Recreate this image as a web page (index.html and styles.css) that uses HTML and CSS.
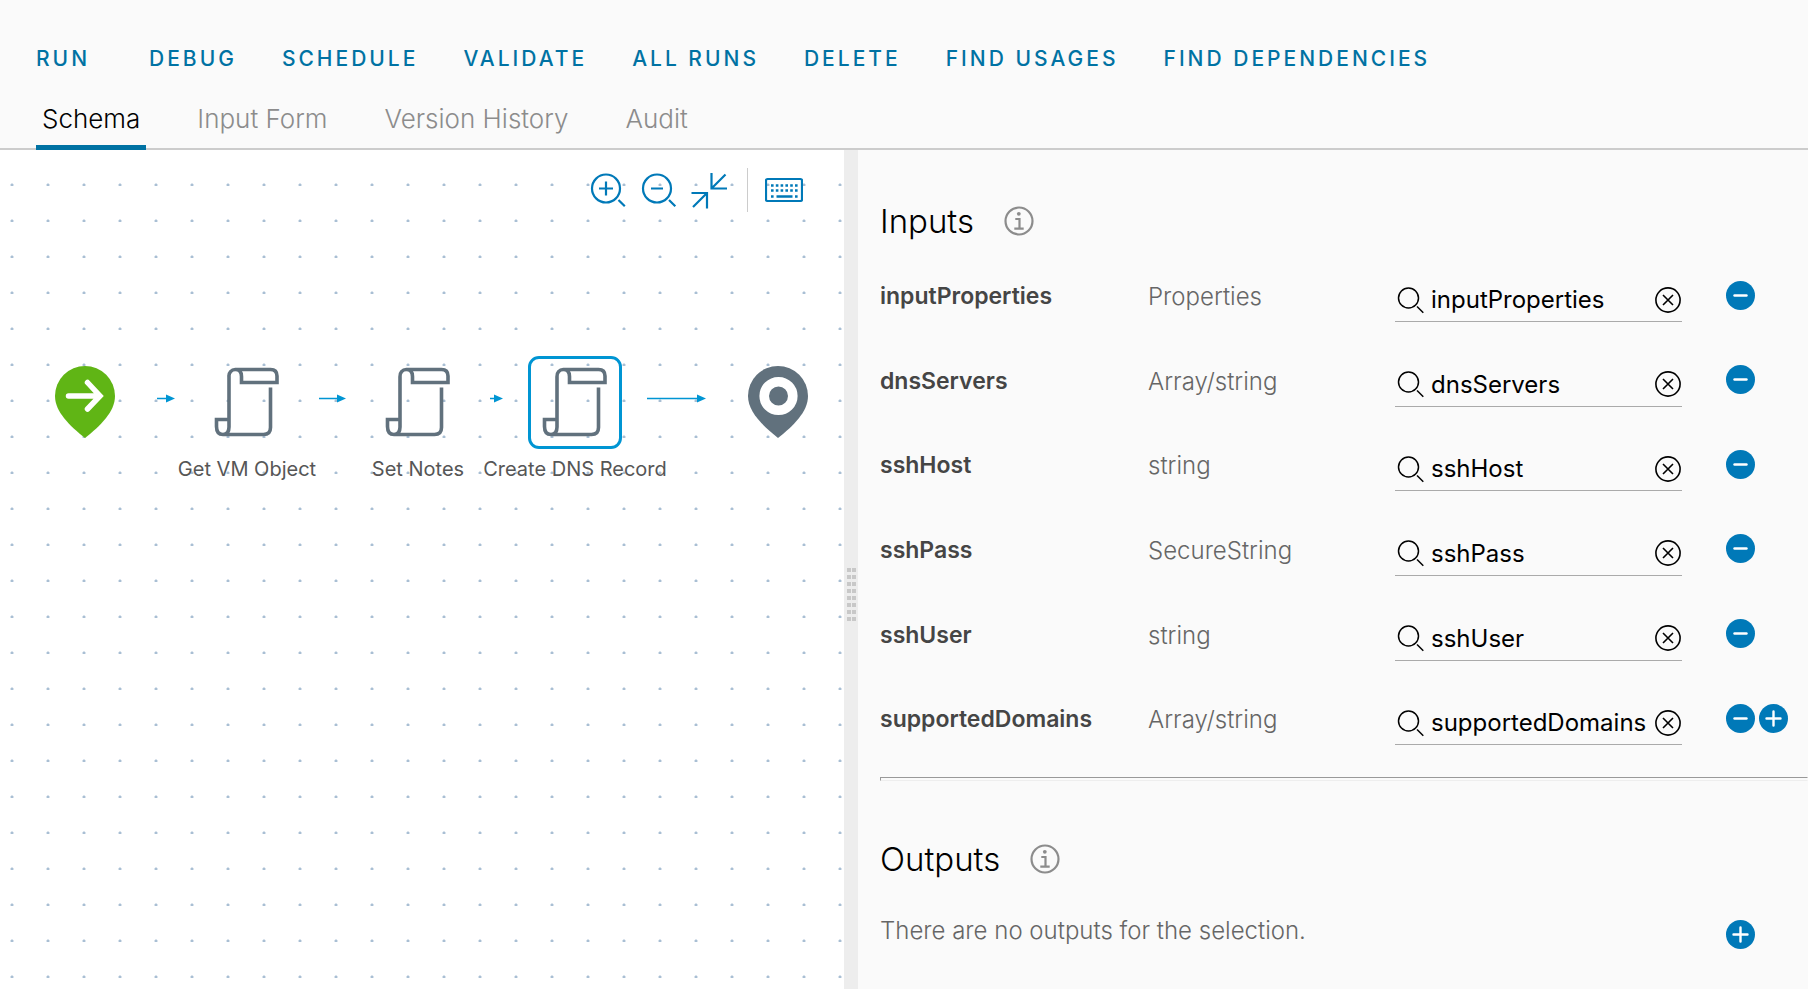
FILE: index.html
```
<!DOCTYPE html>
<html lang="en">
<head>
<meta charset="utf-8">
<title>Workflow editor</title>
<link rel="stylesheet" href="styles.css">
</head>
<body>
<svg class="sprite" aria-hidden="true">
  <symbol id="search" viewBox="0 0 28 28"><g fill="none" stroke="currentColor" stroke-width="1.5"><circle cx="11.5" cy="12" r="10"/><path d="M20 20.5l6.300 6.300"/></g></symbol>
  <symbol id="clear" viewBox="0 0 26 26"><g fill="none" stroke="currentColor" stroke-width="1.600"><circle cx="13" cy="13" r="12.100"/><path d="M8 8l10 10M18 8L8 18"/></g></symbol>
  <symbol id="minus" viewBox="0 0 29 29"><circle cx="14.500" cy="14.500" r="14.500" fill="currentColor"/><path d="M8.500 14.500h12" stroke="#fff" stroke-width="2.400" stroke-linecap="round"/></symbol>
  <symbol id="plus" viewBox="0 0 29 29"><circle cx="14.500" cy="14.500" r="14.500" fill="currentColor"/><path d="M7.500 14.500h14M14.500 7.500v14" stroke="#fff" stroke-width="2.400" stroke-linecap="round"/></symbol>
  <symbol id="info" viewBox="0 0 30 30"><g fill="none" stroke="currentColor" stroke-width="2.200"><circle cx="15" cy="15" r="13.500"/><path d="M11.300 13h4.200v9.300M10.300 22.700h9.400"/></g><circle cx="14.800" cy="7.800" r="1.900" fill="currentColor"/></symbol>
  <symbol id="scroll" viewBox="0 0 66 70"><g fill="none" stroke="currentColor" stroke-width="3.600"><path d="M15 52.500V9.500A6.300 6.300 0 0 1 21.300 2.500H56.500q6.500 0 6.500 6.500v6.500H27.500V9.500Q27.500 2.500 21.300 2.500M15 52.500H2.500v7q0 8 6.500 8Q15 67.500 15 60v-7.500M8.500 67.500H49.500q7 0 7-7V20.500"/></g></symbol>
</svg>

<header class="header">
  <nav class="actions" aria-label="Workflow actions">
    <button class="action action-run">RUN</button>
    <button class="action">DEBUG</button>
    <button class="action">SCHEDULE</button>
    <button class="action">VALIDATE</button>
    <button class="action">ALL RUNS</button>
    <button class="action">DELETE</button>
    <button class="action">FIND USAGES</button>
    <button class="action">FIND DEPENDENCIES</button>
  </nav>
  <div class="tabs" role="tablist">
    <button class="tab tab-active" role="tab" aria-selected="true">Schema</button>
    <button class="tab" role="tab">Input Form</button>
    <button class="tab" role="tab">Version History</button>
    <button class="tab" role="tab">Audit</button>
  </div>
</header>

<main class="workspace">
  <section class="canvas" aria-label="Schema">
    <div class="tools">
      <button class="tool" aria-label="Zoom in"><svg class="tool-icon" viewBox="0 0 38 38"><g fill="none" stroke="currentColor" stroke-width="2.200"><circle cx="17" cy="17.500" r="14"/><path d="M10 17.500h14M17 10.500v14M29.500 29l6.300 6.300"/></g></svg></button>
      <button class="tool" aria-label="Zoom out"><svg class="tool-icon" viewBox="0 0 38 38"><g fill="none" stroke="currentColor" stroke-width="2.200"><circle cx="17" cy="17.500" r="14"/><path d="M11 17.500h12M29 29l6.300 6.300"/></g></svg></button>
      <button class="tool" aria-label="Fit to screen"><svg class="tool-icon" viewBox="0 0 38 38"><path d="M20.500 2V17.500H36M20.500 17.500L34.500 3.500M.5 22H16v15.500M16 22L2 36" fill="none" stroke="currentColor" stroke-width="2.200"/></svg></button>
      <button class="tool tool-keys" aria-label="Keyboard shortcuts"><svg class="tool-icon" viewBox="0 0 38 38"><rect x="1" y="8" width="36" height="22" rx="1.500" fill="none" stroke="currentColor" stroke-width="2.200"/><path d="M6 14.500h27M6 19.500h27" stroke="currentColor" stroke-width="2.600" stroke-dasharray="2.600 2.200"/><path d="M6 25.500h2.600M11.500 25.500h16M30 25.500h2.600" stroke="currentColor" stroke-width="2.400"/></svg></button>
    </div>

    <svg class="links" aria-hidden="true">
      <g stroke="#0095d3" stroke-width="1.300"><path d="M157 248.500h14M319 248.500h22M490 248.500h8M647 248.500h52"/></g>
      <g fill="#0095d3"><path d="M166 244.500l9 4-9 4zM337 244.500l9 4-9 4zM494 244.500l9 4-9 4zM697 244.500l9 4-9 4z"/></g>
    </svg>

    <button class="node node-start" aria-label="Start"><svg class="pin" viewBox="0 0 60 72"><path d="M30 0a30 30 0 0 1 30 30c0 16-15 30-30 42C15 60 0 46 0 30A30 30 0 0 1 30 0z" fill="#60b515"/><path d="M13.500 30H44M32.500 16.500L45 30 32.500 43" fill="none" stroke="#fff" stroke-width="5.500" stroke-linecap="round"/></svg></button>
    <button class="node node-vm"><span class="frame"><svg class="scroll"><use href="#scroll"/></svg></span>Get VM Object</button>
    <button class="node node-notes"><span class="frame"><svg class="scroll"><use href="#scroll"/></svg></span>Set Notes</button>
    <button class="node node-dns"><span class="frame frame-selected"><svg class="scroll"><use href="#scroll"/></svg></span>Create DNS Record</button>
    <button class="node node-end" aria-label="End"><svg class="pin" viewBox="0 0 60 72"><path d="M30 0a30 30 0 0 1 30 30c0 16-15 30-30 42C15 60 0 46 0 30A30 30 0 0 1 30 0z" fill="#61717d"/><circle cx="30.500" cy="30" r="14.300" fill="none" stroke="#fff" stroke-width="9.600"/></svg></button>
  </section>

  <div class="splitter" role="separator" aria-orientation="vertical"><div class="grip"></div></div>

  <aside class="panel">
    <div class="heading"><h2 class="title">Inputs</h2><svg class="info"><use href="#info"/></svg></div>
    <div class="rows">
      <div class="row">
        <label class="name" for="f1">inputProperties</label><span class="type">Properties</span>
        <div class="field"><svg class="search"><use href="#search"/></svg><input class="value" id="f1" value="inputProperties"><button class="clear" aria-label="Clear"><svg class="clear-icon"><use href="#clear"/></svg></button></div>
        <div class="edit"><button class="round" aria-label="Remove"><svg class="round-icon"><use href="#minus"/></svg></button></div>
      </div>
      <div class="row">
        <label class="name" for="f2">dnsServers</label><span class="type">Array/string</span>
        <div class="field"><svg class="search"><use href="#search"/></svg><input class="value" id="f2" value="dnsServers"><button class="clear" aria-label="Clear"><svg class="clear-icon"><use href="#clear"/></svg></button></div>
        <div class="edit"><button class="round" aria-label="Remove"><svg class="round-icon"><use href="#minus"/></svg></button></div>
      </div>
      <div class="row">
        <label class="name" for="f3">sshHost</label><span class="type">string</span>
        <div class="field"><svg class="search"><use href="#search"/></svg><input class="value" id="f3" value="sshHost"><button class="clear" aria-label="Clear"><svg class="clear-icon"><use href="#clear"/></svg></button></div>
        <div class="edit"><button class="round" aria-label="Remove"><svg class="round-icon"><use href="#minus"/></svg></button></div>
      </div>
      <div class="row">
        <label class="name" for="f4">sshPass</label><span class="type">SecureString</span>
        <div class="field"><svg class="search"><use href="#search"/></svg><input class="value" id="f4" value="sshPass"><button class="clear" aria-label="Clear"><svg class="clear-icon"><use href="#clear"/></svg></button></div>
        <div class="edit"><button class="round" aria-label="Remove"><svg class="round-icon"><use href="#minus"/></svg></button></div>
      </div>
      <div class="row">
        <label class="name" for="f5">sshUser</label><span class="type">string</span>
        <div class="field"><svg class="search"><use href="#search"/></svg><input class="value" id="f5" value="sshUser"><button class="clear" aria-label="Clear"><svg class="clear-icon"><use href="#clear"/></svg></button></div>
        <div class="edit"><button class="round" aria-label="Remove"><svg class="round-icon"><use href="#minus"/></svg></button></div>
      </div>
      <div class="row">
        <label class="name" for="f6">supportedDomains</label><span class="type">Array/string</span>
        <div class="field"><svg class="search"><use href="#search"/></svg><input class="value" id="f6" value="supportedDomains"><button class="clear" aria-label="Clear"><svg class="clear-icon"><use href="#clear"/></svg></button></div>
        <div class="edit"><button class="round" aria-label="Remove"><svg class="round-icon"><use href="#minus"/></svg></button><button class="round" aria-label="Add"><svg class="round-icon"><use href="#plus"/></svg></button></div>
      </div>
    </div>
    <hr class="rule">
    <div class="heading"><h2 class="title">Outputs</h2><svg class="info"><use href="#info"/></svg></div>
    <div class="row row-empty">
      <p class="empty">There are no outputs for the selection.</p>
      <div class="edit"><button class="round" aria-label="Add"><svg class="round-icon"><use href="#plus"/></svg></button></div>
    </div>
  </aside>
</main>
</body>
</html>
```
FILE: styles.css
```
* { box-sizing: border-box; }

body {
  margin: 0;
  min-height: 100vh;
  display: flex;
  flex-direction: column;
  background: #fafafa;
  color: #000;
  font-family: Inter, "Open Sans", sans-serif;
  font-size: 24px;
}

button {
  padding: 0;
  border: 0;
  background: none;
  font: inherit;
  color: inherit;
  white-space: nowrap;
  cursor: pointer;
}

svg { display: block; }
.sprite { position: absolute; width: 0; height: 0; }

/* Header */
.header { border-bottom: 2px solid #ccc; }

.actions {
  display: flex;
  gap: 45px;
  padding: 41px 36px 0;
}
.action {
  color: #0072a3;
  font-size: 21px;
  font-weight: 500;
  line-height: 36px;
  letter-spacing: 3px;
}
.action-run { margin-right: 14px; }

.tabs {
  display: flex;
  gap: 45px;
  padding: 17px 36px 0;
}
.tab {
  height: 56px;
  margin-bottom: -2px;
  padding: 0 6px 2px;
  border-bottom: 5px solid transparent;
  color: #8c8c8c;
  font-size: 26px;
  font-weight: 300;
}
.tab-active {
  border-bottom-color: #0072a3;
  color: #000;
}

/* Workspace */
.workspace {
  flex: 1;
  display: grid;
  grid-template-columns: minmax(0, 844fr) 14px minmax(0, 950fr);
}

.canvas {
  position: relative;
  overflow: hidden;
  background: #fff radial-gradient(circle at 12px 35px, #a9bfd4 1px, transparent 2px) 0 0 / 36px 36px;
}

.tools {
  display: flex;
  justify-content: flex-end;
  gap: 13px;
  padding: 18px 41px 0 0;
  color: #0079b8;
}
.tool {
  display: flex;
  align-items: center;
  height: 44px;
}
.tool-icon { width: 38px; height: 38px; }
.tool-keys {
  margin-left: 5px;
  padding-left: 17px;
  border-left: 1px solid #ccc;
}

/* Diagram */
.links {
  position: absolute;
  top: 0;
  left: 0;
  width: 100%;
  height: 100%;
  pointer-events: none;
}
.node {
  position: absolute;
  top: 206px;
  display: flex;
  flex-direction: column;
  align-items: center;
  gap: 8px;
  width: 190px;
  color: #565656;
  font-size: 20px;
  line-height: 24px;
}
.node-vm { left: 152px; }
.node-notes { left: 323px; }
.node-dns { left: 480px; }
.node-start, .node-end { top: 216px; width: 60px; }
.node-start { left: 55px; }
.node-end { left: 748px; }
.pin { width: 60px; height: 72px; }
.frame {
  display: flex;
  align-items: center;
  justify-content: center;
  width: 94px;
  height: 93px;
  padding-bottom: 2px;
  border: 3px solid transparent;
  border-radius: 11px;
}
.frame-selected { border-color: #0095d3; }
.scroll { width: 66px; height: 70px; color: #61717d; }

/* Splitter */
.splitter {
  display: flex;
  align-items: center;
  justify-content: center;
  background: #ededed;
}
.grip {
  width: 10px;
  height: 56px;
  margin-top: 46px;
  background:
    linear-gradient(#ededed 3px, transparent 3px) 0 0 / 5px 7px,
    linear-gradient(90deg, #ededed 1px, #c8c8c8 1px) 0 0 / 5px 7px;
}

/* Parameters panel */
.panel { padding: 50px 0 0 22px; }
.heading {
  display: flex;
  align-items: center;
  gap: 30px;
  height: 42px;
}
.title {
  margin: 0;
  font-size: 33px;
  font-weight: 300;
  line-height: 40px;
}
.info { width: 30px; height: 30px; color: #8c8c8c; }

.rows {
  display: grid;
  grid-auto-rows: 1fr;
  min-height: 520px;
  padding-top: 12px;
}
.row {
  display: grid;
  grid-template-columns: minmax(0, 268fr) minmax(0, 247fr) minmax(0, 287fr) minmax(0, 126fr);
  align-items: start;
  padding-top: 24px;
}
.name {
  color: #454545;
  font-size: 23px;
  font-weight: 600;
  line-height: 36px;
}
.type {
  color: #666;
  font-weight: 300;
  line-height: 38px;
}
.field {
  display: flex;
  align-items: center;
  height: 44px;
  border-bottom: 1px solid #aaa;
}
.search { flex: none; width: 28px; height: 28px; margin-left: 2px; }
.value {
  flex: 1;
  min-width: 0;
  height: 36px;
  margin-left: 6px;
  padding: 0;
  border: 0;
  outline: 0;
  background: none;
  color: #000;
  font: inherit;
}
.clear { margin-right: 1px; }
.clear-icon { width: 26px; height: 26px; }
.edit {
  display: flex;
  align-items: center;
  gap: 4px;
  height: 34px;
  padding-left: 44px;
  color: #0079b8;
}
.round-icon { width: 29px; height: 29px; }

.rule {
  height: 4px;
  margin: 15px 0 57px;
  border: 1px solid;
  border-color: #999 transparent #eee #999;
}
.row-empty {
  grid-template-columns: minmax(0, 802fr) minmax(0, 126fr);
  padding-top: 37px;
}
.empty {
  margin: 0;
  color: #666;
  font-weight: 300;
  line-height: 28px;
}
```
